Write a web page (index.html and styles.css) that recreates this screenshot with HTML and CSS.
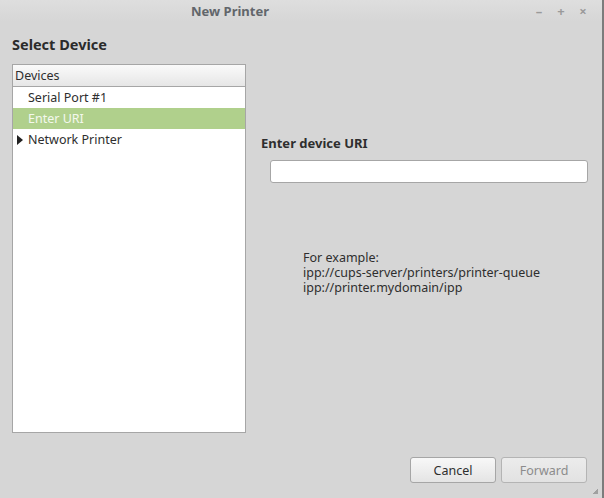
FILE: index.html
```html
<!DOCTYPE html>
<html lang="en">
<head>
    <meta charset="UTF-8">
    <title>New Printer</title>
    <link rel="stylesheet" href="styles.css">
</head>
<body>
    <div class="window">
        <div class="titlebar">
            <span class="title">New Printer</span>
            <div class="controls">
                <span class="ctl">&#8211;</span>
                <span class="ctl">+</span>
                <span class="ctl">&#215;</span>
            </div>
        </div>

        <div class="content">
            <h1 class="heading">Select Device</h1>

            <div class="main">
                <div class="devices">
                    <div class="devices-header">Devices</div>
                    <div class="row">Serial Port #1</div>
                    <div class="row selected">Enter URI</div>
                    <div class="row"><span class="arrow"></span>Network Printer</div>
                </div>

                <div class="pane">
                    <div class="pane-label">Enter device URI</div>
                    <input type="text" class="uri">
                    <div class="example">
                        <div>For example:</div>
                        <div>ipp://cups-server/printers/printer-queue</div>
                        <div>ipp://printer.mydomain/ipp</div>
                    </div>
                </div>
            </div>

            <div class="buttons">
                <button class="btn">Cancel</button>
                <button class="btn" disabled>Forward</button>
            </div>
        </div>
        <div class="grip"></div>
    </div>
</body>
</html>
```

FILE: styles.css
```css
body {
    margin: 0;
    background-color: #d6d6d6;
    font-family: "Noto Sans", "DejaVu Sans", sans-serif;
    font-size: 12.5px;
    color: #2e2e2e;
    overflow: hidden;
}

.window {
    position: relative;
    width: 602px;
    height: 498px;
    border-right: 2px solid #7c7c7c;
    display: flex;
    flex-direction: column;
}

.titlebar {
    height: 22px;
    display: flex;
    align-items: center;
    background: linear-gradient(#dedede, #d6d6d6);
}

.title {
    padding-left: 191px;
    font-weight: bold;
    font-size: 13px;
    color: #62666b;
}

.controls {
    margin-left: auto;
    display: flex;
    gap: 12px;
    padding-right: 14px;
}

.ctl {
    width: 10px;
    text-align: center;
    color: #9a9a9a;
    font-weight: bold;
    font-size: 13px;
}

.content {
    flex: 1;
    display: flex;
    flex-direction: column;
    padding: 0 0 0 12px;
}

.heading {
    margin: 12px 0 10px;
    font-size: 14.5px;
    line-height: 20px;
    color: #2b2b2b;
}

.main {
    display: flex;
}

.devices {
    width: 232px;
    height: 367px;
    background-color: #fff;
    border: 1px solid #a6a6a6;
}

.devices-header {
    height: 21px;
    line-height: 21px;
    padding-left: 2px;
    background: linear-gradient(#fafafa, #e6e6e6);
    border-bottom: 1px solid #a6a6a6;
}

.row {
    height: 21px;
    line-height: 21px;
    padding-left: 15px;
    position: relative;
}

.row.selected {
    background-color: #b0d08c;
    color: #f4f8ee;
}

.arrow {
    position: absolute;
    left: 4px;
    top: 6px;
    border-left: 6px solid #222;
    border-top: 5px solid transparent;
    border-bottom: 5px solid transparent;
}

.pane {
    flex: 1;
    padding: 70px 14px 0 15px;
}

.pane-label {
    font-weight: bold;
    font-size: 13px;
    line-height: 18px;
}

.uri {
    display: block;
    box-sizing: border-box;
    width: 318px;
    height: 23px;
    margin: 8px 0 0 9px;
    border: 1px solid #a6a6a6;
    border-radius: 3px;
    background-color: #fff;
}

.example {
    margin: 67px 0 0 42px;
    line-height: 15px;
}

.example div {
    height: 15px;
}

.buttons {
    display: flex;
    justify-content: flex-end;
    gap: 5px;
    margin-top: 24px;
    padding-right: 15px;
}

.btn {
    width: 86px;
    height: 26px;
    font-family: inherit;
    font-size: 12.5px;
    color: #2e2e2e;
    background: linear-gradient(#f8f8f8, #e4e4e4);
    border: 1px solid #a6a6a6;
    border-radius: 3px;
}

.btn:disabled {
    color: #8c8c8c;
    background: linear-gradient(#ececec, #e2e2e2);
    border-color: #b4b4b4;
}

.grip {
    position: absolute;
    right: 4px;
    bottom: 4px;
    width: 6px;
    height: 6px;
    background: linear-gradient(135deg, transparent 50%, #a0a0a0 50%);
}
```
